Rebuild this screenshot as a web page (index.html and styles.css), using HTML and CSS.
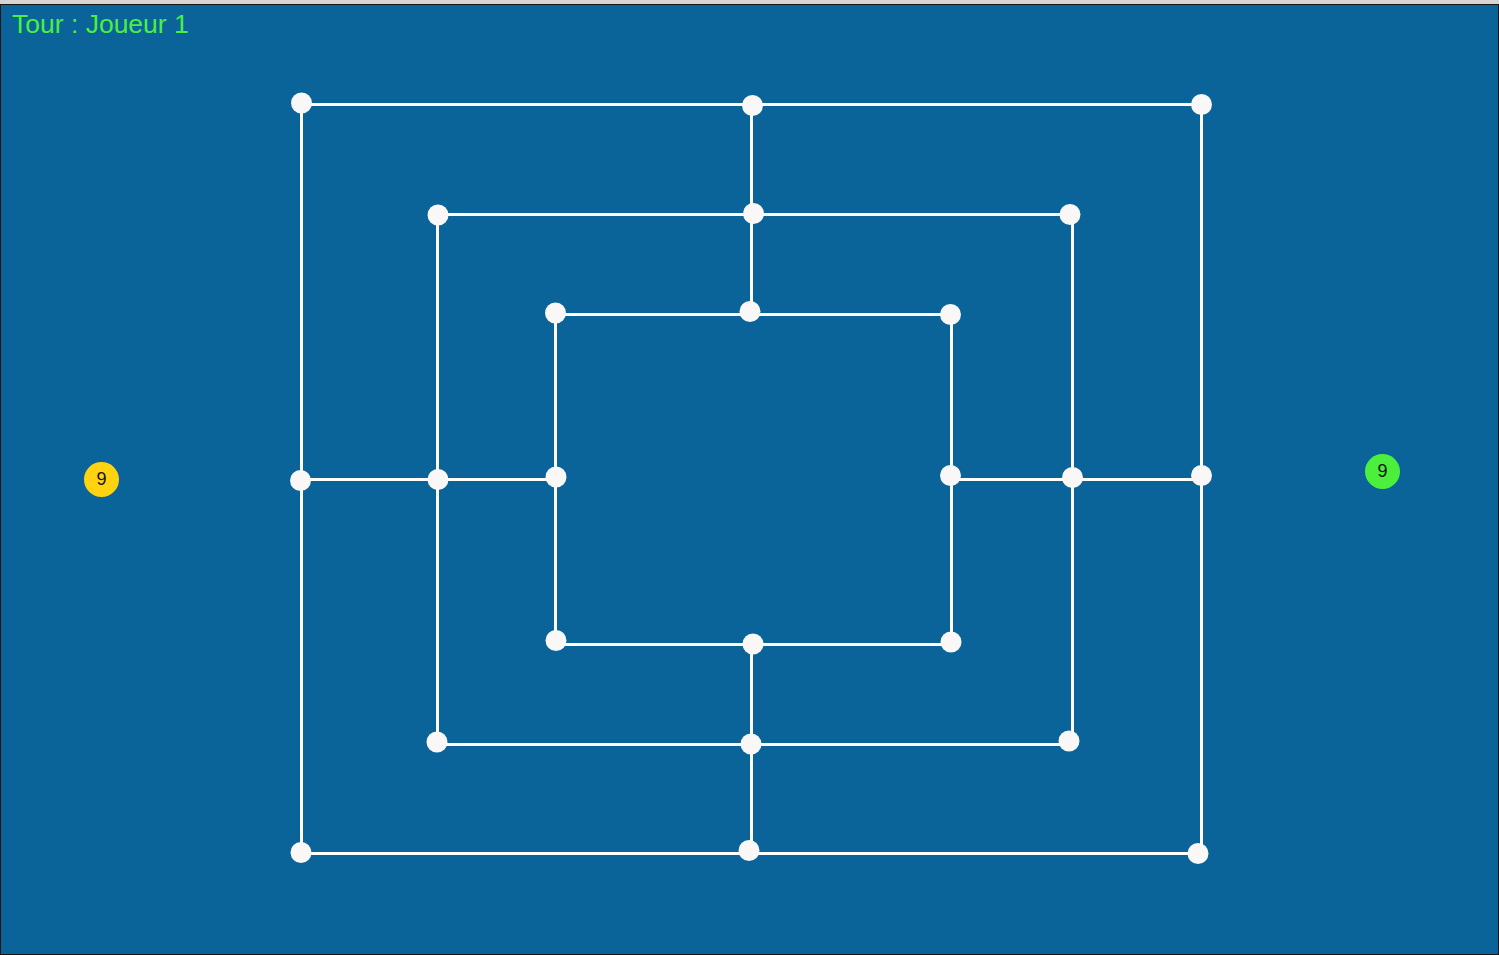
FILE: index.html
```html
<!DOCTYPE html>
<html lang="fr">
<head>
<meta charset="utf-8">
<title>Tour : Joueur 1</title>
<link rel="stylesheet" href="styles.css">
</head>
<body>
<main class="stage">
  <h1 class="turn">Tour : Joueur 1</h1>
  <svg class="board" viewBox="1 5 1497 949" width="1497" height="949" xmlns="http://www.w3.org/2000/svg">
    <g class="lines">
      <rect x="301.5" y="104.5" width="900" height="749"/>
      <rect x="437.5" y="214.5" width="635" height="530"/>
      <rect x="555.5" y="314.5" width="396" height="330"/>
      <line x1="751.5" y1="104.5" x2="751.5" y2="314.5"/>
      <line x1="751.5" y1="644.5" x2="751.5" y2="853.5"/>
      <line x1="301.5" y1="479.5" x2="555.5" y2="479.5"/>
      <line x1="951.5" y1="479.5" x2="1201.5" y2="479.5"/>
    </g>
    <g class="points">
      <circle cx="301.5" cy="103" r="10.5"/>
      <circle cx="752.5" cy="105.5" r="10.5"/>
      <circle cx="1201.5" cy="104.5" r="10.5"/>
      <circle cx="300.5" cy="480.5" r="10.5"/>
      <circle cx="1201.5" cy="475.5" r="10.5"/>
      <circle cx="301" cy="852.5" r="10.5"/>
      <circle cx="749" cy="850.5" r="10.5"/>
      <circle cx="1198" cy="853.5" r="10.5"/>

      <circle cx="438" cy="215" r="10.5"/>
      <circle cx="753.5" cy="213.5" r="10.5"/>
      <circle cx="1070" cy="214.5" r="10.5"/>
      <circle cx="438" cy="479.5" r="10.5"/>
      <circle cx="1072.5" cy="477.5" r="10.5"/>
      <circle cx="437" cy="742" r="10.5"/>
      <circle cx="751" cy="744" r="10.5"/>
      <circle cx="1069" cy="741" r="10.5"/>

      <circle cx="555.5" cy="313" r="10.5"/>
      <circle cx="750" cy="311.5" r="10.5"/>
      <circle cx="950.5" cy="314.5" r="10.5"/>
      <circle cx="556" cy="477" r="10.5"/>
      <circle cx="950.5" cy="475.5" r="10.5"/>
      <circle cx="556" cy="640.5" r="10.5"/>
      <circle cx="753" cy="644" r="10.5"/>
      <circle cx="951" cy="642" r="10.5"/>
    </g>
    <g class="counter counter-p1">
      <circle cx="101.5" cy="479.5" r="17.5"/>
      <text x="101.5" y="484.5">9</text>
    </g>
    <g class="counter counter-p2">
      <circle cx="1382.5" cy="471.5" r="17.5"/>
      <text x="1382.5" y="476.5">9</text>
    </g>
  </svg>
</main>
</body>
</html>
```

FILE: styles.css
```css
html, body {
  margin: 0;
  padding: 0;
}

body {
  background: #d8d5d0;
  padding-top: 4px;
  width: 1499px;
  height: 955px;
  box-sizing: border-box;
  overflow: hidden;
  font-family: "Liberation Sans", Arial, sans-serif;
}

.stage {
  position: relative;
  box-sizing: border-box;
  width: 1499px;
  height: 951px;
  border: 1px solid #151515;
  background: #0a6399;
}

.turn {
  position: absolute;
  top: 4px;
  left: 11px;
  margin: 0;
  font-family: "Liberation Sans", Arial, sans-serif;
  font-weight: normal;
  font-size: 26.5px;
  line-height: 31px;
  color: #4bf03f;
}

.board {
  display: block;
}

.lines rect,
.lines line {
  fill: none;
  stroke: #ffffff;
  stroke-width: 3;
}

.points circle {
  fill: #f9f8f6;
}

.counter text {
  font-family: "Liberation Sans", Arial, sans-serif;
  font-size: 18px;
  fill: #111111;
  text-anchor: middle;
}

.counter-p1 circle {
  fill: #ffd30f;
}

.counter-p2 circle {
  fill: #4cf03c;
}
```
